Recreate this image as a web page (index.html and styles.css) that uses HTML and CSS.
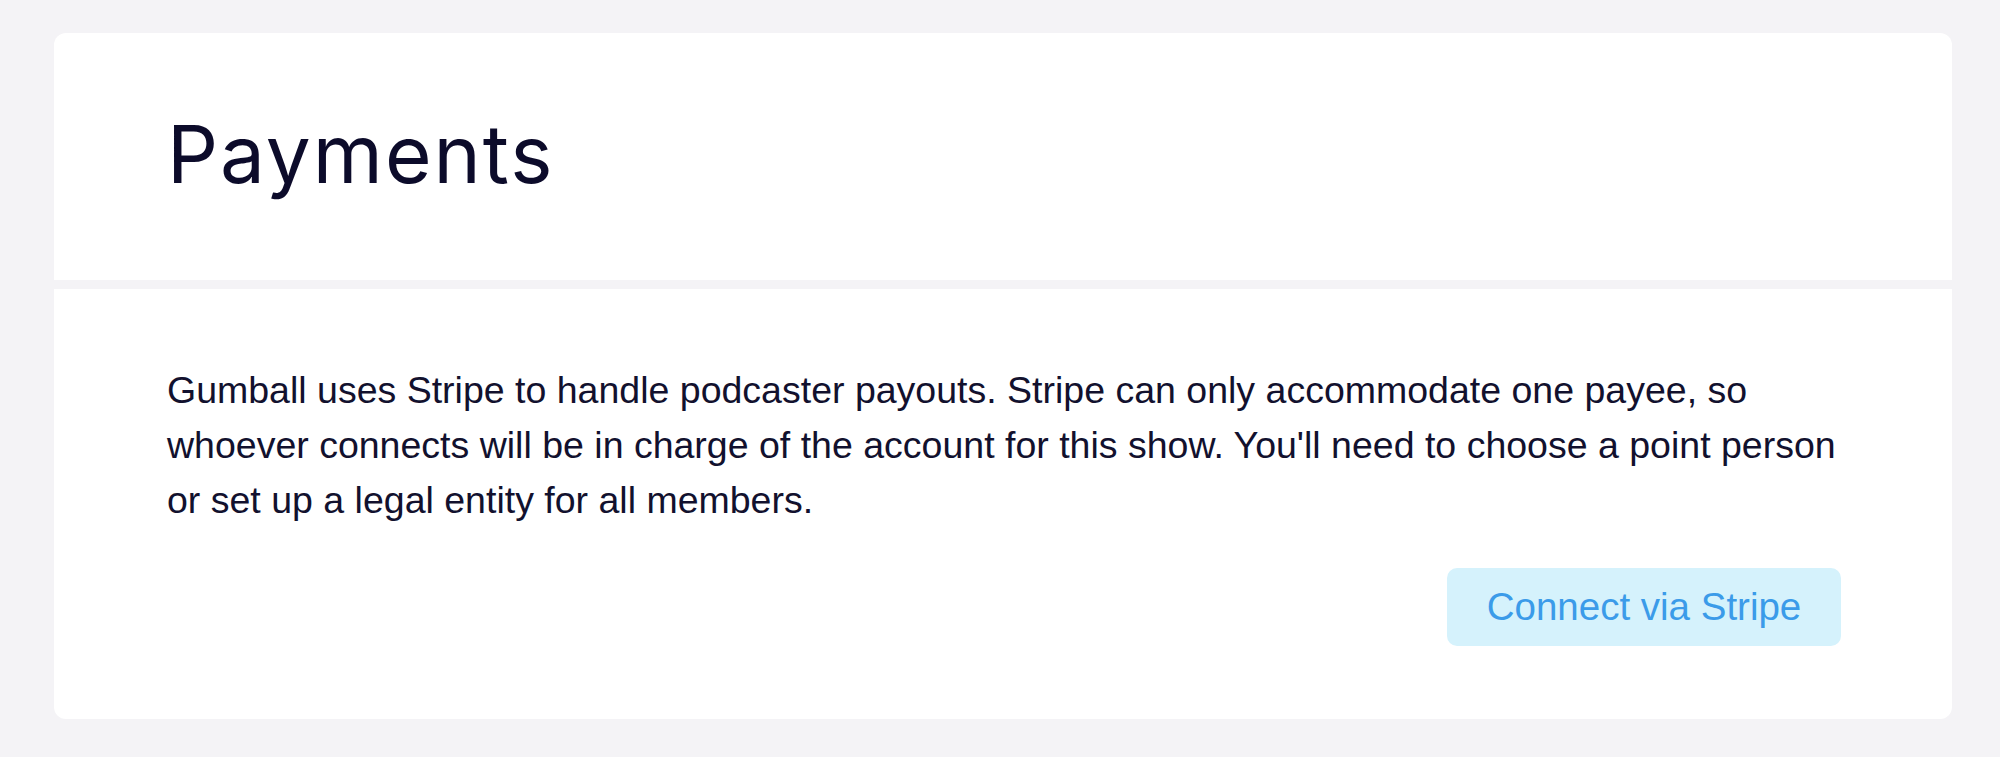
FILE: index.html
```html
<!DOCTYPE html>
<html lang="en">
<head>
<meta charset="utf-8">
<title>Payments</title>
<link rel="stylesheet" href="styles.css">
</head>
<body>
<main class="page">
  <section class="card">
    <header class="card-head">
      <h1 class="title">Payments</h1>
    </header>
    <div class="card-body">
      <p class="copy">Gumball uses Stripe to handle podcaster payouts. Stripe can only accommodate one payee, so whoever connects will be in charge of the account for this show. You'll need to choose a point person or set up a legal entity for all members.</p>
      <div class="actions">
        <button class="btn-connect" type="button">Connect via Stripe</button>
      </div>
    </div>
  </section>
</main>
</body>
</html>
```
FILE: styles.css
```css
html, body {
  margin: 0;
  padding: 0;
  background: #f4f3f6;
}
body {
  font-family: "Liberation Sans", Arial, sans-serif;
  color: #12112e;
}
.page {
  padding: 33px 48px 39px 54px;
}
.card {
  display: flex;
  flex-direction: column;
  gap: 9px;
}
.card-head {
  background: #ffffff;
  border-radius: 12px 12px 0 0;
  height: 247px;
  display: flex;
  align-items: center;
  padding: 0 113px;
}
.title {
  margin: 0;
  font-family: Inter, "Liberation Sans", sans-serif;
  font-weight: 400;
  font-size: 80px;
  letter-spacing: 2px;
  line-height: 1;
  color: #0c0b2a;
  padding-bottom: 5px;
}
.card-body {
  background: #ffffff;
  border-radius: 0 0 12px 12px;
  padding: 74px 111px 73px 113px;
}
.copy {
  margin: 0;
  font-size: 37.5px;
  line-height: 55px;
  color: #12112e;
  margin-right: -14px;
}
.actions {
  display: flex;
  justify-content: flex-end;
  margin-top: 40px;
}
.btn-connect {
  font-family: "Liberation Sans", Arial, sans-serif;
  font-size: 38.5px;
  font-weight: 400;
  color: #3b9be9;
  background: #d5f2fc;
  border: none;
  border-radius: 10px;
  height: 78px;
  width: 394px;
  padding: 0;
  cursor: pointer;
}
```
